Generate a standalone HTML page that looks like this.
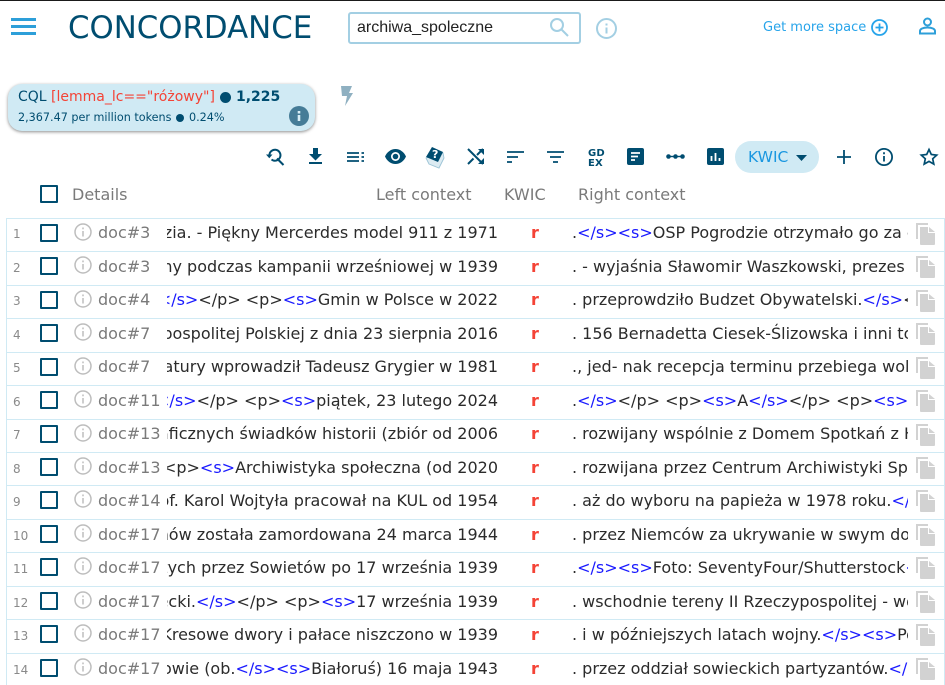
<!DOCTYPE html>
<html><head><meta charset="utf-8"><style>
html,body{margin:0;padding:0;background:#fff;width:945px;height:685px;overflow:hidden;font-family:"DejaVu Sans","Liberation Sans",sans-serif;color:#2b2b2b}
#p{position:relative;width:945px;height:685px;overflow:hidden}
.a{position:absolute;white-space:nowrap}
svg{position:absolute;overflow:visible}
.r{position:absolute;left:6px;width:937px;height:32.5px;border:1px solid #d0eaf4;border-width:1px 1px 0 1px}
.n{position:absolute;left:6px;top:7.500px;width:24px;font-size:12px;line-height:16px;color:#8a8a8a}
.c{position:absolute;left:33px;top:5px;width:14px;height:14px;border:2px solid #004d70;border-radius:1px}
.d{position:absolute;left:91px;top:3.500px;font-size:16px;line-height:22px;color:#7a7a7a}
.l{position:absolute;left:160px;top:2.500px;width:331px;height:24px;overflow:hidden;display:flex;justify-content:flex-end;white-space:nowrap;font-size:16px;line-height:24px}
.k{position:absolute;left:524px;top:2.500px;font-size:16px;line-height:24px;font-weight:bold;color:#f44336}
.t{position:absolute;left:565px;top:2.500px;width:336px;height:24px;overflow:hidden;white-space:nowrap;font-size:16px;line-height:24px}
.x .l,.x .k,.x .t{top:3px}
.x .d{top:4px}
.x .n{top:8px}
b.s{font-weight:normal;color:#1a1aff}
.i{left:67px;top:4px;width:18px;height:18px}
.f{left:909px;top:4px;width:19px;height:22px}
.h{font-size:16px;color:#7a7a7a;line-height:22px}
</style></head><body><div id="p">
<div class="a" style="left:0;top:0;width:945px;height:1px;background:#1a1a1a"></div>
<div class="a" style="left:11px;top:18px;width:25px;height:3px;background:#2d9fd9"></div>
<div class="a" style="left:11px;top:25px;width:25px;height:3px;background:#2d9fd9"></div>
<div class="a" style="left:11px;top:32px;width:25px;height:3px;background:#2d9fd9"></div>
<div class="a" style="left:68px;top:8px;font-size:30.800px;line-height:40px;color:#004d70">CONCORDANCE</div>
<div class="a" style="left:348px;top:12px;width:229px;height:28px;border:2px solid #a3cfe3;border-radius:3px"></div>
<div class="a" style="left:357px;top:16px;font-family:'Liberation Sans',sans-serif;font-size:16px;line-height:23px;color:#222">archiwa_spoleczne</div>
<svg style="left:550px;top:18px" width="19" height="19" viewBox="0 0 19 19" fill="none" stroke="#a3cfe3" stroke-width="2"><circle cx="7" cy="7" r="6"/><path d="M11.500 11.500L18 18"/></svg>
<svg style="left:596px;top:18px" width="21" height="21" viewBox="0 0 21 21" fill="none" stroke="#a3cfe3" stroke-width="2"><circle cx="10.500" cy="10.500" r="9.500"/><path d="M10.500 9.500v6M10.500 5.500v2"/></svg>
<div class="a" style="left:763px;top:19px;font-size:13px;line-height:18px;color:#27a4ea">Get more space</div>
<svg style="left:871px;top:19px" width="17" height="17" viewBox="0 0 17 17" fill="none" stroke="#27a4ea" stroke-width="1.800"><circle cx="8.500" cy="8.500" r="7.500"/><path d="M8.500 4.500v8M4.500 8.500h8"/></svg>
<svg style="left:919px;top:17px" width="17" height="18" viewBox="0 0 17 18" fill="none" stroke="#2d9fd9" stroke-width="2"><circle cx="8.500" cy="5" r="3.500"/><path d="M1 16.500v-2.500c0-2 3-3.500 7.500-3.500s7.500 1.500 7.500 3.500v2.500z"/></svg>
<div class="a" style="left:8px;top:84px;width:306.500px;height:47px;border-radius:14px;background:#d0eaf4;box-shadow:0 1px 3px rgba(0,0,0,.45)"></div>
<div class="a" style="left:18px;top:87px;font-size:14px;line-height:20px;color:#004d70">CQL <span style="color:#f44336">[lemma_lc=="różowy"]</span></div>
<div class="a" style="left:220px;top:92px;width:11px;height:11px;border-radius:50%;background:#004d70"></div>
<div class="a" style="left:236px;top:87px;font-size:14px;line-height:20px;font-weight:bold;color:#004d70">1,225</div>
<div class="a" style="left:18px;top:110px;font-size:11.200px;line-height:16px;color:#004d70">2,367.47 per million tokens</div>
<div class="a" style="left:176px;top:114px;width:8px;height:8px;border-radius:50%;background:#004d70"></div>
<div class="a" style="left:189px;top:110px;font-size:11.200px;line-height:16px;color:#004d70">0.24%</div>
<div class="a" style="left:289px;top:106px;width:20px;height:20px;border-radius:50%;background:#457c97"></div>
<svg style="left:289px;top:106px" width="20" height="20" viewBox="0 0 20 20" fill="none" stroke="#d8eef6" stroke-width="2.600"><path d="M10 9v6M10 5v2.500"/></svg>
<svg style="left:340px;top:86px" width="13" height="20" viewBox="0 0 13 20" fill="#8fb0c1"><path d="M1 0h11l-3 7h4L5 20l2-10H2z"/></svg>
<svg style="left:266px;top:147px" width="20" height="19" viewBox="0 0 20 19" fill="none" stroke="#004d70" stroke-width="2"><path d="M3.500 9a5.500 5.500 0 1 1 2 3.500"/><path d="M11 11.500l6.500 6.500"/><path d="M0 7.500h6.500l-3.200 3.800z" fill="#004d70" stroke="none"/></svg>
<svg style="left:308px;top:148px" width="15" height="16" viewBox="0 0 15 16" fill="#004d70"><path d="M5 0h5v6h4l-6.500 6.500L1 6h4zM1 14h13v2H1z"/></svg>
<svg style="left:347px;top:151px" width="17" height="12" viewBox="0 0 17 12" fill="none" stroke="#004d70" stroke-width="1.800"><path d="M0 2h12M0 6h12M0 10h12M14.500 2H17M14.500 6H17M14.500 10H17"/></svg>
<svg style="left:385px;top:149px" width="21" height="15" viewBox="0 0 21 15" fill="#004d70"><path fill-rule="evenodd" d="M0 7.500C2 3 6 0 10.500 0S19 3 21 7.500C19 12 15 15 10.500 15S2 12 0 7.500zM10.500 3a4.500 4.500 0 1 0 0 9 4.500 4.500 0 0 0 0-9z"/><circle cx="10.500" cy="7.500" r="2.800"/></svg>
<svg style="left:425px;top:146px" width="20" height="22" viewBox="0 0 20 22"><path d="M1 12l3 6 10 4 5-10-1-5z" fill="#dcebf2" stroke="#9cc4d6" stroke-width=".9"/><path d="M7 1l11 5-5 10L1 11z" fill="#004d70"/><text x="7" y="12" font-size="11" font-weight="bold" fill="#fff" font-family="DejaVu Sans">?</text></svg>
<div class="a" style="left:588px;top:149px;font-size:10px;line-height:9.500px;color:#004d70;font-weight:bold;letter-spacing:.2px">GD<br>EX</div>
<svg style="left:467px;top:148px" width="17" height="17" viewBox="0 0 17 17" fill="none" stroke="#004d70" stroke-width="2"><path d="M1 1l15 15M1 16l5.500-5.500M10 7l6-6"/><path d="M11 1h6v6zM11 16h6v-6z" fill="#004d70" stroke="none"/></svg>
<svg style="left:507px;top:151px" width="17" height="12" viewBox="0 0 17 12" fill="none" stroke="#004d70" stroke-width="1.800"><path d="M0 1h17M0 6h11M0 11h5"/></svg>
<svg style="left:547px;top:151px" width="17" height="12" viewBox="0 0 17 12" fill="none" stroke="#004d70" stroke-width="1.800"><path d="M0 1h17M3 6h11M6 11h5"/></svg>
<svg style="left:627px;top:148px" width="17" height="17" viewBox="0 0 17 17"><rect width="17" height="17" rx="2" fill="#004d70"/><path d="M4 5h9M4 8.500h7M4 12h4" stroke="#fff" stroke-width="1.800"/></svg>
<svg style="left:666px;top:153px" width="19" height="7" viewBox="0 0 19 7" fill="#004d70"><circle cx="2.500" cy="3.500" r="2.300"/><circle cx="9.500" cy="3.500" r="2.300"/><circle cx="16.500" cy="3.500" r="2.300"/><path d="M3 2.800h13v1.400H3z"/></svg>
<svg style="left:707px;top:148px" width="17" height="17" viewBox="0 0 17 17"><rect width="17" height="17" rx="2" fill="#004d70"/><path d="M4.500 8v5M8.500 5v8M12.500 10v3" stroke="#fff" stroke-width="1.800"/></svg>
<div class="a" style="left:735px;top:141px;width:84px;height:32px;border-radius:16px;background:#d0eaf4"></div>
<div class="a" style="left:748px;top:147px;font-size:15.500px;line-height:20px;color:#1a97e0">KWIC</div>
<svg style="left:796px;top:155px" width="11" height="6" viewBox="0 0 11 6" fill="#004d70"><path d="M0 0h11L5.500 6z"/></svg>
<svg style="left:837px;top:150px" width="14" height="14" viewBox="0 0 14 14" fill="none" stroke="#004d70" stroke-width="1.800"><path d="M7 0v14M0 7h14"/></svg>
<svg style="left:875px;top:148px" width="18" height="18" viewBox="0 0 18 18" fill="none" stroke="#004d70" stroke-width="1.800"><circle cx="9" cy="9" r="8.100"/><path d="M9 8v5.500M9 4.300v2"/></svg>
<svg style="left:920px;top:148px" width="18" height="17" viewBox="0 0 18 17" fill="none" stroke="#004d70" stroke-width="1.700"><path d="M9 1.500l2.300 5 5.400.6-4 3.700 1.100 5.300L9 13.400l-4.800 2.700 1.100-5.300-4-3.700 5.400-.6z"/></svg>
<div class="a" style="left:40px;top:185px;width:14px;height:14px;border:2px solid #004d70;border-radius:1px"></div>
<div class="a h" style="left:72px;top:184px">Details</div>
<div class="a h" style="left:376px;top:184px">Left context</div>
<div class="a h" style="left:504px;top:184px">KWIC</div>
<div class="a h" style="left:578px;top:184px">Right context</div>

<div class="r" style="top:217.500px"><div class="n">1</div><div class="c"></div><svg class="i" viewBox="0 0 18 18" fill="none" stroke="#bdbdbd" stroke-width="1.500"><circle cx="9" cy="9" r="8"/><path d="M9 8v5.500M9 4.500v1.800"/></svg><div class="d">doc#3</div><div class="l"><span>Ale to bezia. - Piękny Mercerdes model 911 z 1971</span></div><div class="k">r</div><div class="t">.<b class="s">&lt;/s&gt;&lt;s&gt;</b>OSP Pogrodzie otrzymało go za darmo</div><svg class="f" viewBox="0 0 19 22" fill="#d2d2d2"><path d="M0 0h12v2H2v14H0z"/><path d="M4 4h8v6h7v11a1 1 0 0 1-1 1H5a1 1 0 0 1-1-1zM13 4l6 5h-6z"/></svg></div>
<div class="r" style="top:251px"><div class="n">2</div><div class="c"></div><svg class="i" viewBox="0 0 18 18" fill="none" stroke="#bdbdbd" stroke-width="1.500"><circle cx="9" cy="9" r="8"/><path d="M9 8v5.500M9 4.500v1.800"/></svg><div class="d">doc#3</div><div class="l"><span>zniszczony podczas kampanii wrześniowej w 1939</span></div><div class="k">r</div><div class="t">. - wyjaśnia Sławomir Waszkowski, prezes OSP</div><svg class="f" viewBox="0 0 19 22" fill="#d2d2d2"><path d="M0 0h12v2H2v14H0z"/><path d="M4 4h8v6h7v11a1 1 0 0 1-1 1H5a1 1 0 0 1-1-1zM13 4l6 5h-6z"/></svg></div>
<div class="r" style="top:284.500px"><div class="n">3</div><div class="c"></div><svg class="i" viewBox="0 0 18 18" fill="none" stroke="#bdbdbd" stroke-width="1.500"><circle cx="9" cy="9" r="8"/><path d="M9 8v5.500M9 4.500v1.800"/></svg><div class="d">doc#4</div><div class="l"><span><b class="s">&lt;/s&gt;</b>&lt;/p&gt; &lt;p&gt;<b class="s">&lt;s&gt;</b>Gmin w Polsce w 2022</span></div><div class="k">r</div><div class="t">. przeprowdziło Budzet Obywatelski.<b class="s">&lt;/s&gt;</b>&lt;/p&gt;</div><svg class="f" viewBox="0 0 19 22" fill="#d2d2d2"><path d="M0 0h12v2H2v14H0z"/><path d="M4 4h8v6h7v11a1 1 0 0 1-1 1H5a1 1 0 0 1-1-1zM13 4l6 5h-6z"/></svg></div>
<div class="r" style="top:318px"><div class="n">4</div><div class="c"></div><svg class="i" viewBox="0 0 18 18" fill="none" stroke="#bdbdbd" stroke-width="1.500"><circle cx="9" cy="9" r="8"/><path d="M9 8v5.500M9 4.500v1.800"/></svg><div class="d">doc#7</div><div class="l"><span>Rzeczypospolitej Polskiej z dnia 23 sierpnia 2016</span></div><div class="k">r</div><div class="t">. 156 Bernadetta Ciesek-Ślizowska i inni to</div><svg class="f" viewBox="0 0 19 22" fill="#d2d2d2"><path d="M0 0h12v2H2v14H0z"/><path d="M4 4h8v6h7v11a1 1 0 0 1-1 1H5a1 1 0 0 1-1-1zM13 4l6 5h-6z"/></svg></div>
<div class="r" style="top:351.500px"><div class="n">5</div><div class="c"></div><svg class="i" viewBox="0 0 18 18" fill="none" stroke="#bdbdbd" stroke-width="1.500"><circle cx="9" cy="9" r="8"/><path d="M9 8v5.500M9 4.500v1.800"/></svg><div class="d">doc#7</div><div class="l"><span>literatury wprowadził Tadeusz Grygier w 1981</span></div><div class="k">r</div><div class="t">., jed- nak recepcja terminu przebiega wolno</div><svg class="f" viewBox="0 0 19 22" fill="#d2d2d2"><path d="M0 0h12v2H2v14H0z"/><path d="M4 4h8v6h7v11a1 1 0 0 1-1 1H5a1 1 0 0 1-1-1zM13 4l6 5h-6z"/></svg></div>
<div class="r" style="top:385px"><div class="n">6</div><div class="c"></div><svg class="i" viewBox="0 0 18 18" fill="none" stroke="#bdbdbd" stroke-width="1.500"><circle cx="9" cy="9" r="8"/><path d="M9 8v5.500M9 4.500v1.800"/></svg><div class="d">doc#11</div><div class="l"><span><b class="s">&lt;/s&gt;</b>&lt;/p&gt; &lt;p&gt;<b class="s">&lt;s&gt;</b>piątek, 23 lutego 2024</span></div><div class="k">r</div><div class="t">.<b class="s">&lt;/s&gt;</b>&lt;/p&gt; &lt;p&gt;<b class="s">&lt;s&gt;</b>A<b class="s">&lt;/s&gt;</b>&lt;/p&gt; &lt;p&gt;<b class="s">&lt;s&gt;</b></div><svg class="f" viewBox="0 0 19 22" fill="#d2d2d2"><path d="M0 0h12v2H2v14H0z"/><path d="M4 4h8v6h7v11a1 1 0 0 1-1 1H5a1 1 0 0 1-1-1zM13 4l6 5h-6z"/></svg></div>
<div class="r" style="top:418.500px"><div class="n">7</div><div class="c"></div><svg class="i" viewBox="0 0 18 18" fill="none" stroke="#bdbdbd" stroke-width="1.500"><circle cx="9" cy="9" r="8"/><path d="M9 8v5.500M9 4.500v1.800"/></svg><div class="d">doc#13</div><div class="l"><span>biograficznych świadków historii (zbiór od 2006</span></div><div class="k">r</div><div class="t">. rozwijany wspólnie z Domem Spotkań z Historią</div><svg class="f" viewBox="0 0 19 22" fill="#d2d2d2"><path d="M0 0h12v2H2v14H0z"/><path d="M4 4h8v6h7v11a1 1 0 0 1-1 1H5a1 1 0 0 1-1-1zM13 4l6 5h-6z"/></svg></div>
<div class="r" style="top:452px"><div class="n">8</div><div class="c"></div><svg class="i" viewBox="0 0 18 18" fill="none" stroke="#bdbdbd" stroke-width="1.500"><circle cx="9" cy="9" r="8"/><path d="M9 8v5.500M9 4.500v1.800"/></svg><div class="d">doc#13</div><div class="l"><span>&lt;p&gt;<b class="s">&lt;s&gt;</b>Archiwistyka społeczna (od 2020</span></div><div class="k">r</div><div class="t">. rozwijana przez Centrum Archiwistyki Społecznej</div><svg class="f" viewBox="0 0 19 22" fill="#d2d2d2"><path d="M0 0h12v2H2v14H0z"/><path d="M4 4h8v6h7v11a1 1 0 0 1-1 1H5a1 1 0 0 1-1-1zM13 4l6 5h-6z"/></svg></div>
<div class="r" style="top:485px"><div class="n">9</div><div class="c"></div><svg class="i" viewBox="0 0 18 18" fill="none" stroke="#bdbdbd" stroke-width="1.500"><circle cx="9" cy="9" r="8"/><path d="M9 8v5.500M9 4.500v1.800"/></svg><div class="d">doc#14</div><div class="l"><span>Prof. Karol Wojtyła pracował na KUL od 1954</span></div><div class="k">r</div><div class="t">. aż do wyboru na papieża w 1978 roku.<b class="s">&lt;/s&gt;</b></div><svg class="f" viewBox="0 0 19 22" fill="#d2d2d2"><path d="M0 0h12v2H2v14H0z"/><path d="M4 4h8v6h7v11a1 1 0 0 1-1 1H5a1 1 0 0 1-1-1zM13 4l6 5h-6z"/></svg></div>
<div class="r x" style="top:518.500px"><div class="n">10</div><div class="c"></div><svg class="i" viewBox="0 0 18 18" fill="none" stroke="#bdbdbd" stroke-width="1.500"><circle cx="9" cy="9" r="8"/><path d="M9 8v5.500M9 4.500v1.800"/></svg><div class="d">doc#17</div><div class="l"><span>Ulmów została zamordowana 24 marca 1944</span></div><div class="k">r</div><div class="t">. przez Niemców za ukrywanie w swym domu</div><svg class="f" viewBox="0 0 19 22" fill="#d2d2d2"><path d="M0 0h12v2H2v14H0z"/><path d="M4 4h8v6h7v11a1 1 0 0 1-1 1H5a1 1 0 0 1-1-1zM13 4l6 5h-6z"/></svg></div>
<div class="r" style="top:552px"><div class="n">11</div><div class="c"></div><svg class="i" viewBox="0 0 18 18" fill="none" stroke="#bdbdbd" stroke-width="1.500"><circle cx="9" cy="9" r="8"/><path d="M9 8v5.500M9 4.500v1.800"/></svg><div class="d">doc#17</div><div class="l"><span>zajętych przez Sowietów po 17 września 1939</span></div><div class="k">r</div><div class="t">.<b class="s">&lt;/s&gt;&lt;s&gt;</b>Foto: SeventyFour/Shutterstock<b class="s">&lt;/s&gt;</b></div><svg class="f" viewBox="0 0 19 22" fill="#d2d2d2"><path d="M0 0h12v2H2v14H0z"/><path d="M4 4h8v6h7v11a1 1 0 0 1-1 1H5a1 1 0 0 1-1-1zM13 4l6 5h-6z"/></svg></div>
<div class="r x" style="top:585.500px"><div class="n">12</div><div class="c"></div><svg class="i" viewBox="0 0 18 18" fill="none" stroke="#bdbdbd" stroke-width="1.500"><circle cx="9" cy="9" r="8"/><path d="M9 8v5.500M9 4.500v1.800"/></svg><div class="d">doc#17</div><div class="l"><span>Polecki.<b class="s">&lt;/s&gt;</b>&lt;/p&gt; &lt;p&gt;<b class="s">&lt;s&gt;</b>17 września 1939</span></div><div class="k">r</div><div class="t">. wschodnie tereny II Rzeczypospolitej - wojna</div><svg class="f" viewBox="0 0 19 22" fill="#d2d2d2"><path d="M0 0h12v2H2v14H0z"/><path d="M4 4h8v6h7v11a1 1 0 0 1-1 1H5a1 1 0 0 1-1-1zM13 4l6 5h-6z"/></svg></div>
<div class="r" style="top:619px"><div class="n">13</div><div class="c"></div><svg class="i" viewBox="0 0 18 18" fill="none" stroke="#bdbdbd" stroke-width="1.500"><circle cx="9" cy="9" r="8"/><path d="M9 8v5.500M9 4.500v1.800"/></svg><div class="d">doc#17</div><div class="l"><span>Kresowe dwory i pałace niszczono w 1939</span></div><div class="k">r</div><div class="t">. i w późniejszych latach wojny.<b class="s">&lt;/s&gt;&lt;s&gt;</b>Pod</div><svg class="f" viewBox="0 0 19 22" fill="#d2d2d2"><path d="M0 0h12v2H2v14H0z"/><path d="M4 4h8v6h7v11a1 1 0 0 1-1 1H5a1 1 0 0 1-1-1zM13 4l6 5h-6z"/></svg></div>
<div class="r x" style="top:652.500px"><div class="n">14</div><div class="c"></div><svg class="i" viewBox="0 0 18 18" fill="none" stroke="#bdbdbd" stroke-width="1.500"><circle cx="9" cy="9" r="8"/><path d="M9 8v5.500M9 4.500v1.800"/></svg><div class="d">doc#17</div><div class="l"><span>Nowie (ob.<b class="s">&lt;/s&gt;&lt;s&gt;</b>Białoruś) 16 maja 1943</span></div><div class="k">r</div><div class="t">. przez oddział sowieckich partyzantów.<b class="s">&lt;/s&gt;</b></div><svg class="f" viewBox="0 0 19 22" fill="#d2d2d2"><path d="M0 0h12v2H2v14H0z"/><path d="M4 4h8v6h7v11a1 1 0 0 1-1 1H5a1 1 0 0 1-1-1zM13 4l6 5h-6z"/></svg></div>
</div></body></html>
